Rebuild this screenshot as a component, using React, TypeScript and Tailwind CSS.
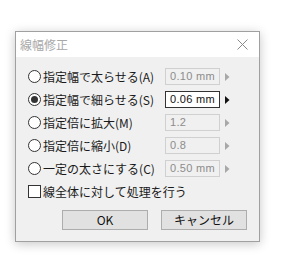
import React from 'react';

type Row = { label: string; value: string; active?: boolean };

const rows: Row[] = [
  { label: '指定幅で太らせる(A)', value: '0.10 mm' },
  { label: '指定幅で細らせる(S)', value: '0.06 mm', active: true },
  { label: '指定倍に拡大(M)', value: '1.2' },
  { label: '指定倍に縮小(D)', value: '0.8' },
  { label: '一定の太さにする(C)', value: '0.50 mm' },
];

function Radio({ checked }: { checked?: boolean }) {
  return (
    <span className="w-[13px] h-[13px] rounded-full border border-[#333] bg-white flex items-center justify-center shrink-0">
      {checked && <span className="w-[7px] h-[7px] rounded-full bg-[#333]" />}
    </span>
  );
}

export default function App() {
  return (
    <div
      className="w-[281px] h-[260px] bg-white overflow-hidden pt-[31px] pl-[15px]"
      style={{ fontFamily: '"Noto Sans CJK JP", "Liberation Sans", sans-serif' }}
    >
      <div className="w-[245px] h-[211px] border border-[#a0a0a0] bg-[#f0f0f0] flex flex-col shadow-[0_2px_10px_rgba(0,0,0,0.22)]">
        {/* タイトルバー */}
        <div className="h-[25px] bg-white flex items-center justify-between pl-[4px] pr-[11px] shrink-0">
          <span className="text-[12px] text-[#a8a8a8] leading-none">線幅修正</span>
          <svg width="11" height="11" viewBox="0 0 11 11">
            <path d="M0.5 0.5 L10.5 10.5 M10.5 0.5 L0.5 10.5" stroke="#8a8a8a" strokeWidth="1" />
          </svg>
        </div>

        {/* 本体 */}
        <div className="flex flex-col pt-[11px] pl-[12px] text-[12px] text-[#1a1a1a]">
          <div className="flex flex-col gap-[6px]">
            {rows.map((r) => (
              <div key={r.label} className="flex items-center h-[17px]">
                <Radio checked={r.active} />
                <span className="w-[124px] pl-[2px] leading-none whitespace-nowrap">{r.label}</span>
                <div
                  className={
                    r.active
                      ? 'w-[55px] h-[17px] border border-[#333] bg-white text-[#111] pl-[4px] flex items-center leading-none text-[11px] tracking-[0.3px]'
                      : 'w-[55px] h-[17px] border border-[#d0d0d0] bg-[#f0f0f0] text-[#8c8c8c] pl-[4px] flex items-center leading-none text-[11px] tracking-[0.3px]'
                  }
                  style={{ fontFamily: '"Liberation Sans", sans-serif' }}
                >
                  {r.value}
                </div>
                <svg width="5" height="8" viewBox="0 0 5 8" className="ml-[5px]">
                  <path d="M0 0 L4.5 4 L0 8 Z" fill={r.active ? '#111' : '#a8a8a8'} />
                </svg>
              </div>
            ))}
            <div className="flex items-center h-[17px]">
              <span className="w-[13px] h-[13px] border border-[#333] bg-white shrink-0" />
              <span className="pl-[2px] leading-none whitespace-nowrap">線全体に対して処理を行う</span>
            </div>
          </div>

          {/* ボタン */}
          <div className="flex gap-[13px] mt-[10px] pl-[34px]">
            <button className="w-[86px] h-[20px] border border-[#adadad] bg-[#e1e1e1] text-[12px] leading-none text-[#111]">
              OK
            </button>
            <button className="w-[86px] h-[20px] border border-[#adadad] bg-[#e1e1e1] text-[12px] leading-none text-[#111]">
              キャンセル
            </button>
          </div>
        </div>
      </div>
    </div>
  );
}
